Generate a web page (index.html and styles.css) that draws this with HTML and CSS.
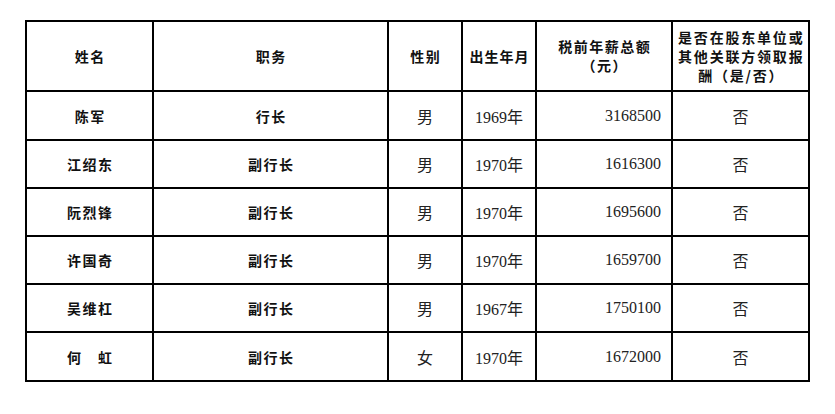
FILE: index.html
```html
<!DOCTYPE html>
<html lang="zh-CN">
<head>
<meta charset="utf-8">
<title>高管薪酬</title>
<link rel="stylesheet" href="styles.css">
</head>
<body>
<table class="pay">
  <colgroup>
    <col class="c-name"><col class="c-job"><col class="c-sex"><col class="c-born"><col class="c-amt"><col class="c-rel">
  </colgroup>
  <thead>
    <tr class="head">
      <th>姓名</th>
      <th>职务</th>
      <th>性别</th>
      <th class="tight">出生年月</th>
      <th class="two">税前年薪总额<br>（元）</th>
      <th class="three">是否在股东单位或<br>其他关联方领取报<br>酬（是/否）</th>
    </tr>
  </thead>
  <tbody>
    <tr class="r49"><td class="nm">陈军</td><td class="nm">行长</td><td class="tx">男</td><td class="tx">1969年</td><td class="num">3168500</td><td class="tx">否</td></tr>
    <tr class="r48"><td class="nm">江绍东</td><td class="nm">副行长</td><td class="tx">男</td><td class="tx">1970年</td><td class="num">1616300</td><td class="tx">否</td></tr>
    <tr class="r48"><td class="nm">阮烈锋</td><td class="nm">副行长</td><td class="tx">男</td><td class="tx">1970年</td><td class="num">1695600</td><td class="tx">否</td></tr>
    <tr class="r48"><td class="nm">许国奇</td><td class="nm">副行长</td><td class="tx">男</td><td class="tx">1970年</td><td class="num">1659700</td><td class="tx">否</td></tr>
    <tr class="r48"><td class="nm">吴维杠</td><td class="nm">副行长</td><td class="tx">男</td><td class="tx">1967年</td><td class="num">1750100</td><td class="tx">否</td></tr>
    <tr class="r49"><td class="nm">何　虹</td><td class="nm">副行长</td><td class="tx">女</td><td class="tx">1970年</td><td class="num">1672000</td><td class="tx">否</td></tr>
  </tbody>
</table>
</body>
</html>
```

FILE: styles.css
```css
html, body {
  margin: 0;
  padding: 0;
  background: #ffffff;
}
body {
  padding: 20px 0 0 25px;
}
.pay {
  border-collapse: collapse;
  table-layout: fixed;
  width: 785px;
  color: #111;
}
.c-name { width: 127px; }
.c-job { width: 235px; }
.c-sex { width: 74px; }
.c-born { width: 74px; }
.c-amt { width: 136px; }
.c-rel { width: 137px; }

.pay th, .pay td {
  border: 2px solid #000;
  padding: 0;
  text-align: center;
  vertical-align: middle;
}
.head { height: 70px; }
.r49 { height: 49px; }
.r48 { height: 48px; }

.pay th {
  font-family: "Noto Sans CJK SC", "Noto Sans", sans-serif;
  font-weight: 700;
  font-size: 14px;
  letter-spacing: 1.5px;
  line-height: 20px;
  padding-left: 1.5px;
}
.pay th.tight { letter-spacing: 1px; padding-left: 1px; }
.pay th.two { line-height: 19px; }
.pay th.three { line-height: 19px; letter-spacing: 1.8px; padding-top: 1px; }

.pay td.nm {
  font-family: "Noto Sans CJK SC", "Noto Sans", sans-serif;
  font-weight: 700;
  font-size: 14px;
  letter-spacing: 1.5px;
  padding-left: 1.5px;
}
.pay td.tx, .pay td.num {
  font-family: "Liberation Serif", "Noto Sans CJK SC", serif;
  font-weight: 400;
  font-size: 16px;
  color: #222;
}
.pay td.num {
  text-align: right;
  padding-right: 10px;
}
```
